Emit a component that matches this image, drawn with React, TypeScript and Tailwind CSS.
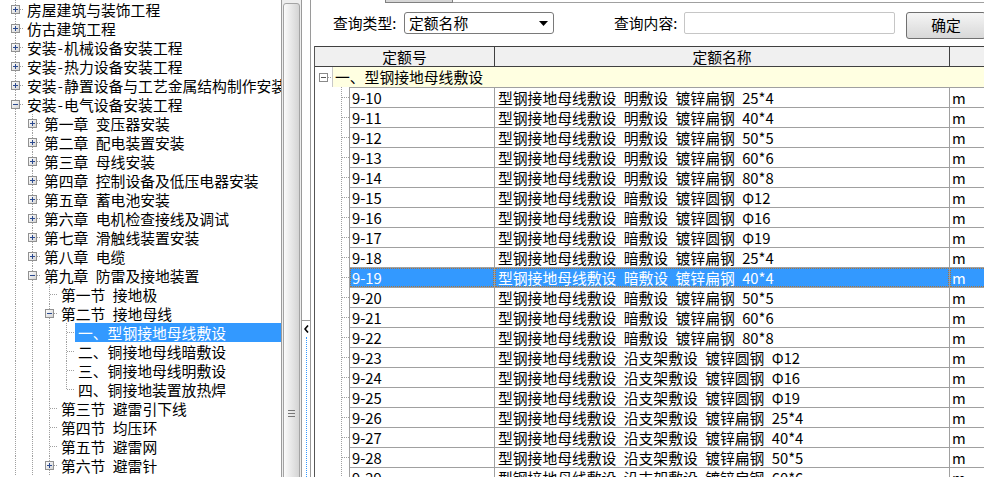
import { useId } from "react";

type TreeNode = { g: string; t: string; sel?: boolean };

const tree: TreeNode[] = [
  { g: "P", t: "房屋建筑与装饰工程" },
  { g: "P", t: "仿古建筑工程" },
  { g: "P", t: "安装-机械设备安装工程" },
  { g: "P", t: "安装-热力设备安装工程" },
  { g: "P", t: "安装-静置设备与工艺金属结构制作安装工程" },
  { g: "M", t: "安装-电气设备安装工程" },
  { g: "IP", t: "第一章 变压器安装" },
  { g: "IP", t: "第二章 配电装置安装" },
  { g: "IP", t: "第三章 母线安装" },
  { g: "IP", t: "第四章 控制设备及低压电器安装" },
  { g: "IP", t: "第五章 蓄电池安装" },
  { g: "IP", t: "第六章 电机检查接线及调试" },
  { g: "IP", t: "第七章 滑触线装置安装" },
  { g: "IP", t: "第八章 电缆" },
  { g: "IM", t: "第九章 防雷及接地装置" },
  { g: "IIT", t: "第一节 接地极" },
  { g: "IIM", t: "第二节 接地母线" },
  { g: "IIIT", t: "一、型钢接地母线敷设", sel: true },
  { g: "IIIT", t: "二、铜接地母线暗敷设" },
  { g: "IIIT", t: "三、铜接地母线明敷设" },
  { g: "IIIL", t: "四、铜接地装置放热焊" },
  { g: "IIT", t: "第三节 避雷引下线" },
  { g: "IIT", t: "第四节 均压环" },
  { g: "IIT", t: "第五节 避雷网" },
  { g: "IIP", t: "第六节 避雷针" },
];

const rows: [string, string, string, string][] = [
  ["9-10", "明敷设", "镀锌扁钢", "25*4"],
  ["9-11", "明敷设", "镀锌扁钢", "40*4"],
  ["9-12", "明敷设", "镀锌扁钢", "50*5"],
  ["9-13", "明敷设", "镀锌扁钢", "60*6"],
  ["9-14", "明敷设", "镀锌扁钢", "80*8"],
  ["9-15", "暗敷设", "镀锌圆钢", "Φ12"],
  ["9-16", "暗敷设", "镀锌圆钢", "Φ16"],
  ["9-17", "暗敷设", "镀锌圆钢", "Φ19"],
  ["9-18", "暗敷设", "镀锌扁钢", "25*4"],
  ["9-19", "暗敷设", "镀锌扁钢", "40*4"],
  ["9-20", "暗敷设", "镀锌扁钢", "50*5"],
  ["9-21", "暗敷设", "镀锌扁钢", "60*6"],
  ["9-22", "暗敷设", "镀锌扁钢", "80*8"],
  ["9-23", "沿支架敷设", "镀锌圆钢", "Φ12"],
  ["9-24", "沿支架敷设", "镀锌圆钢", "Φ16"],
  ["9-25", "沿支架敷设", "镀锌圆钢", "Φ19"],
  ["9-26", "沿支架敷设", "镀锌扁钢", "25*4"],
  ["9-27", "沿支架敷设", "镀锌扁钢", "40*4"],
  ["9-28", "沿支架敷设", "镀锌扁钢", "50*5"],
  ["9-29", "沿支架敷设", "镀锌扁钢", "60*6"],
];

const SP = "\u2002";
const dot = { stroke: "#a0a0a0", strokeDasharray: "1 1" };

function Guide({ k }: { k: string }) {
  const id = useId();
  const box = k === "P" || k === "M";
  return (
    <svg width="17" height="19" className="block shrink-0" shapeRendering="crispEdges">
      <defs>
        <linearGradient id={id} x1="0" y1="0" x2="1" y2="1">
          <stop offset="0" stopColor="#ffffff" />
          <stop offset="1" stopColor="#d2d2d2" />
        </linearGradient>
      </defs>
      <line x1="8.5" y1="0" x2="8.5" y2={k === "L" ? 10 : 19} {...dot} />
      {k !== "I" && <line x1="9" y1="9.5" x2="17" y2="9.5" {...dot} />}
      {box && (
        <>
          <rect x="4.5" y="5.5" width="8" height="8" fill={`url(#${id})`} stroke="#919191" />
          <line x1="6" y1="9.5" x2="11" y2="9.5" stroke="#2b4a8f" />
          {k === "P" && <line x1="8.5" y1="7" x2="8.5" y2="12" stroke="#2b4a8f" />}
        </>
      )}
    </svg>
  );
}

// half-width dash like the bitmap font in the original
function Label({ text }: { text: string }) {
  const parts = text.replace(" ", SP).split("-");
  if (parts.length === 1) return <>{parts[0]}</>;
  return (
    <>
      {parts[0]}
      <span className="inline-block w-[7.5px] text-center">-</span>
      {parts[1]}
    </>
  );
}

function TreePanel() {
  return (
    <div className="w-[281px] shrink-0 overflow-hidden text-[14.8px]">
      {tree.map((n) => (
        <div key={n.t} className="flex h-[19px] pl-[7px]">
          {n.g.split("").map((k, i) => (
            <Guide key={i} k={k} />
          ))}
          {n.sel ? (
            <span className="h-[19px] flex-1 whitespace-nowrap bg-[#3399ff] pl-[3px] leading-[19px] text-white">
              {n.t}
            </span>
          ) : (
            <span className="ml-[3px] h-[19px] whitespace-nowrap leading-[19px]">
              <Label text={n.t} />
            </span>
          )}
        </div>
      ))}
    </div>
  );
}

function ScrollBar() {
  return (
    <div className="w-[20px] shrink-0 border-l border-[#9c9c9c] bg-[#eeeeee] px-[1px] pt-[3px]">
      <div className="flex h-[600px] flex-col items-center gap-[2px] rounded-[3px] border border-[#a4a4a4] bg-linear-to-r from-[#fbfbfb] to-[#d4d4d4] pt-[406px]">
        <div className="h-px w-[7px] bg-[#777777]" />
        <div className="h-px w-[7px] bg-[#777777]" />
        <div className="h-px w-[7px] bg-[#777777]" />
      </div>
    </div>
  );
}

function Splitter() {
  return (
    <div className="flex w-[10px] shrink-0 flex-col border-x border-[#9a9a9a] bg-white">
      <div className="h-[320px]" />
      <div className="flex h-[17px] items-center justify-center border-t border-[#9a9a9a]">
        <svg width="5" height="8">
          <polyline points="4,0.5 1,4 4,7.5" fill="none" stroke="#000" strokeWidth="1.6" />
        </svg>
      </div>
      <div className="flex flex-1 justify-center">
        <div className="border-l border-dotted border-[#3399ff]" />
      </div>
    </div>
  );
}

function QueryBar() {
  return (
    <div className="mt-[9px] flex h-[27px] items-start">
      <div className="ml-[22px] h-[22px] w-[67px] shrink-0 leading-[22px]">查询类型:</div>
      <div className="ml-[4px] flex h-[22px] w-[150px] shrink-0 items-center justify-between rounded-[3px] border border-[#7a7a7a] bg-white pl-[4px] pr-[5px]">
        <span className="leading-[20px]">定额名称</span>
        <svg width="9" height="5">
          <polygon points="0,0 9,0 4.5,5" fill="#000" />
        </svg>
      </div>
      <div className="ml-[60px] h-[22px] w-[66px] shrink-0 leading-[22px]">查询内容:</div>
      <div className="ml-[4px] h-[22px] w-[211px] shrink-0 rounded-[2px] border border-[#c6c6c6] bg-white" />
      <div className="ml-[11px] flex h-[27px] w-[80px] shrink-0 items-center justify-center rounded-[3px] border border-[#707070] bg-linear-to-b from-[#f5f5f5] to-[#d8d8d8]">
        确定
      </div>
    </div>
  );
}

function GridTable() {
  return (
    <div className="ml-[3px] mt-[7px] w-[700px] shrink-0 border-l border-[#555555]">
      <div className="flex h-[21px] border-y border-[#404040] bg-[#f0f0f0] leading-[19px]">
        <div className="w-[180px] border-r border-[#404040] text-center">定额号</div>
        <div className="w-[455px] border-r border-[#404040] text-center">定额名称</div>
        <div className="flex-1" />
      </div>

      <div className="flex h-[20px]">
        <svg width="17" height="20" className="block shrink-0" shapeRendering="crispEdges">
          <rect x="4.5" y="6.5" width="8" height="8" fill="#fff" stroke="#8a8a8a" />
          <line x1="6" y1="10.5" x2="11" y2="10.5" stroke="#555" />
          <line x1="13" y1="10.5" x2="17" y2="10.5" {...dot} />
        </svg>
        <div className="flex-1 border-l border-[#c8c8c8] bg-[#ffffe1] pl-[2px] leading-[20px]">
          一、型钢接地母线敷设
        </div>
      </div>

      {rows.map(([code, a, b, c], i) => {
        const sel = i === 9;
        const name = `型钢接地母线敷设${SP}${a}${SP}${b}${SP}${c}`;
        const inner = sel
          ? "h-full border border-dotted border-[#a8743c] leading-[17px]"
          : "h-full leading-[19px]";
        const cell = sel ? "bg-[#3399ff] text-white" : "";
        return (
          <div key={code} className="flex h-[20px]">
            <svg width="34" height="20" className="block shrink-0" shapeRendering="crispEdges">
              <line x1="26.5" y1="0" x2="26.5" y2="20" {...dot} />
              <line x1="27" y1="10.5" x2="34" y2="10.5" {...dot} />
            </svg>
            <div className={`w-[146px] border-x border-t border-[#a0a0a0] ${cell}`}>
              <div className={`${inner} ${sel ? "pl-[1px]" : "pl-[2px]"}`}>{code}</div>
            </div>
            <div className={`w-[455px] border-r border-t border-[#a0a0a0] ${cell}`}>
              <div className={`${inner} whitespace-nowrap ${sel ? "pl-[2px]" : "pl-[3px]"}`}>{name}</div>
            </div>
            <div className={`flex-1 border-t border-[#a0a0a0] ${cell}`}>
              <div className={`${inner} ${sel ? "pl-[1px]" : "pl-[2px]"}`}>m</div>
            </div>
          </div>
        );
      })}
    </div>
  );
}

export default function App() {
  return (
    <div className="flex h-[477px] w-[984px] overflow-hidden bg-white font-['Noto_Sans_CJK_SC',sans-serif] text-[14.8px] text-black">
      <TreePanel />
      <ScrollBar />
      <Splitter />
      <div className="flex min-w-0 flex-1 flex-col overflow-hidden">
        <div className="flex h-[3px] shrink-0">
          <div className="w-[74px]" />
          <div className="w-[68px] border-x border-b border-[#808080] bg-[#d6d6d6]" />
          <div className="flex-1 border-b border-[#a0a0a0]" />
        </div>
        <QueryBar />
        <GridTable />
      </div>
    </div>
  );
}
